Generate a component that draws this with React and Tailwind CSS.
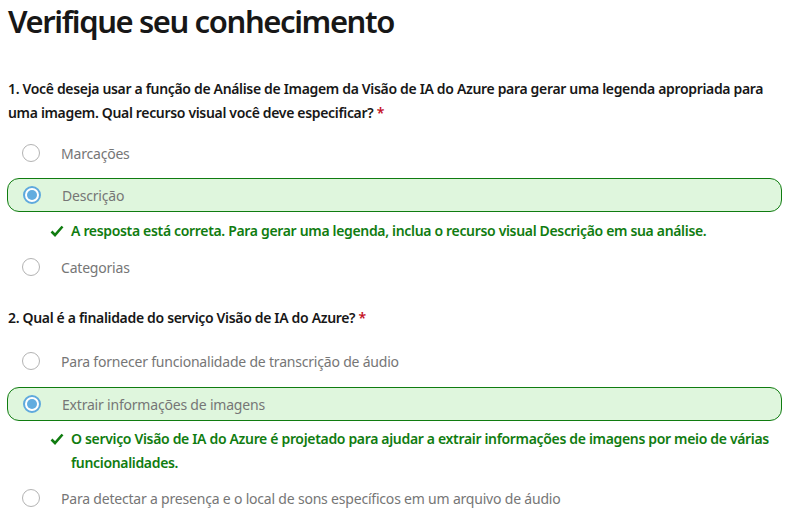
const font = { fontFamily: '"Noto Sans", "Open Sans", sans-serif' };

function Radio({ checked }) {
  if (checked) {
    return (
      <span className="flex h-[18px] w-[18px] shrink-0 items-center justify-center rounded-full border-2 border-[#5fa9dd] bg-white">
        <span className="h-[10px] w-[10px] rounded-full bg-[#62acdf]" />
      </span>
    );
  }
  return <span className="h-[18px] w-[18px] shrink-0 rounded-full border border-[#b3b3b3] bg-white" />;
}

function Check() {
  return (
    <svg width="14" height="12" viewBox="0 0 14 12" className="shrink-0">
      <path d="M1.5 6.5 L5 10 L12.5 1.5" fill="none" stroke="#107c10" strokeWidth="2.6" />
    </svg>
  );
}

function Option({ label, selected }) {
  const base = "flex h-[34px] items-center gap-[21px] pl-[15px]";
  return (
    <div className={selected ? base + " rounded-[12px] border border-[#107c10] bg-[#dff6dd]" : base}>
      <Radio checked={selected} />
      <span className="text-[14px] tracking-[-0.2px] text-[#767676]">{label}</span>
    </div>
  );
}

function Feedback({ children }) {
  return (
    <div className="flex items-start gap-[7px] pl-[43px] pr-2">
      <span className="pt-[6px]">
        <Check />
      </span>
      <p className="text-[14px] font-semibold leading-[24px] tracking-[-0.33px] text-[#107c10]">{children}</p>
    </div>
  );
}

export default function App() {
  return (
    <div className="min-h-[528px] bg-white text-[#171717]" style={font}>
      <div className="w-[791px] pl-[7px] pr-[9px]">
        <h1 className="pl-[1px] pt-[1px] text-[31px] font-semibold leading-[40px] tracking-[-1.4px]">
          Verifique seu conhecimento
        </h1>

        <div className="mt-[36px] pl-[1px] pr-[8px] text-[14px] font-semibold leading-[24px] tracking-[-0.33px]">
          1. Você deseja usar a função de Análise de Imagem da Visão de IA do Azure para gerar uma legenda apropriada para
          uma imagem. Qual recurso visual você deve especificar?<span className="text-[#c50f1f]">&nbsp;*</span>
        </div>

        <div className="mt-[11px] flex flex-col gap-[8px]">
          <Option label="Marcações" />
          <Option label="Descrição" selected />
        </div>
        <div className="mt-[7px]">
          <Feedback>A resposta está correta. Para gerar uma legenda, inclua o recurso visual Descrição em sua análise.</Feedback>
        </div>
        <div className="mt-[7px]">
          <Option label="Categorias" />
        </div>

        <div className="mt-[22px] pl-[1px] text-[14px] font-semibold leading-[24px] tracking-[-0.33px]">
          2. Qual é a finalidade do serviço Visão de IA do Azure?<span className="text-[#c50f1f]">&nbsp;*</span>
        </div>

        <div className="mt-[14px] flex flex-col gap-[9px]">
          <Option label="Para fornecer funcionalidade de transcrição de áudio" />
          <Option label="Extrair informações de imagens" selected />
        </div>
        <div className="mt-[6px]">
          <Feedback>
            O serviço Visão de IA do Azure é projetado para ajudar a extrair informações de imagens por meio de várias
            funcionalidades.
          </Feedback>
        </div>
        <div className="mt-[6px]">
          <Option label="Para detectar a presença e o local de sons específicos em um arquivo de áudio" />
        </div>
      </div>
    </div>
  );
}
